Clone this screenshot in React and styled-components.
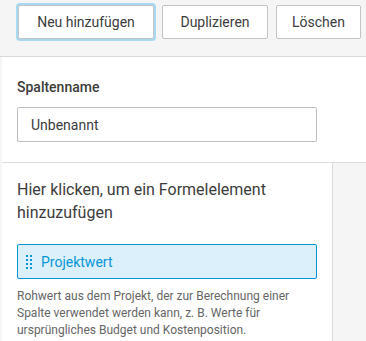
import React from "react";
import styled, { createGlobalStyle } from "styled-components";

const Global = createGlobalStyle`
  html, body { margin: 0; padding: 0; background: #f5f5f5; }
  body { font-family: "Roboto", "Noto Sans", sans-serif; color: #3c3c3c; }
  * { box-sizing: border-box; }
`;

const Page = styled.div`
  width: 366px;
  height: 341px;
  overflow: hidden;
  background: #f5f5f5;
  display: flex;
  flex-direction: column;
`;

const Toolbar = styled.div`
  height: 57px;
  display: flex;
  align-items: flex-start;
  gap: 8px;
  padding: 5px 0 0 18px;
  border-bottom: 1px solid #d9d9d9;
  flex-shrink: 0;
`;

const Button = styled.button`
  height: 34px;
  width: ${(p) => p.$w}px;
  padding: 0;
  background: #fff;
  border: 1px solid #c4c4c4;
  border-radius: 2px;
  font-family: inherit;
  font-size: 14px;
  color: #3c3c3c;
  white-space: nowrap;
  box-shadow: ${(p) => (p.$focused ? "0 0 0 2px #a7d9f2" : "none")};
`;

const Main = styled.div`
  flex: 1;
  margin-left: 2px;
  display: flex;
  flex-direction: column;
  background: #fff;
`;

const NameSection = styled.div`
  padding: 22px 0 0 15px;
  height: 106px;
  border-bottom: 1px solid #dcdcdc;
  flex-shrink: 0;
`;

const Label = styled.div`
  font-size: 14px;
  line-height: 16px;
  font-weight: 500;
  color: #3c3c3c;
  margin-bottom: 12px;
`;

const Input = styled.div`
  width: 300px;
  height: 35px;
  border: 1px solid #bdbdbd;
  border-radius: 2px;
  display: flex;
  align-items: center;
  padding-left: 13px;
  font-size: 14px;
  color: #3c3c3c;
`;

const Lower = styled.div`
  flex: 1;
  display: flex;
`;

const FormulaPanel = styled.div`
  width: 331px;
  background: #fff;
  border-right: 1px solid #dcdcdc;
  padding: 15px 0 0 15px;
`;

const Side = styled.div`
  flex: 1;
  background: #f5f5f5;
`;

const Heading = styled.div`
  font-size: 16px;
  line-height: 23px;
  color: #3c3c3c;
  width: 300px;
`;

const Item = styled.div`
  margin-top: 20px;
  width: 300px;
  height: 35px;
  background: #dcf0fb;
  border: 1px solid #0696d7;
  border-radius: 2px;
  display: flex;
  align-items: center;
  padding-left: 8px;
  gap: 9px;
  color: #0696d7;
  font-size: 14px;
`;

const Description = styled.div`
  margin-top: 9px;
  width: 305px;
  font-size: 12px;
  line-height: 17px;
  color: #666;
`;

const Grip = () => (
  <svg width="6" height="14" viewBox="0 0 6 14">
    {[0, 1, 2, 3].map((r) =>
      [0, 1].map((c) => (
        <rect key={`${r}-${c}`} x={c * 4} y={r * 4} width="2" height="2" fill="#0696d7" />
      ))
    )}
  </svg>
);

export default function App() {
  return (
    <>
      <Global />
      <Page>
        <Toolbar>
          <Button $focused $w={136}>Neu hinzufügen</Button>
          <Button $w={106}>Duplizieren</Button>
          <Button $w={85}>Löschen</Button>
        </Toolbar>
        <Main>
          <NameSection>
            <Label>Spaltenname</Label>
            <Input>Unbenannt</Input>
          </NameSection>
          <Lower>
            <FormulaPanel>
              <Heading>Hier klicken, um ein Formelelement hinzuzufügen</Heading>
              <Item>
                <Grip />
                Projektwert
              </Item>
              <Description>
                Rohwert aus dem Projekt, der zur Berechnung einer Spalte verwendet werden kann, z. B. Werte für ursprüngliches Budget und Kostenposition.
              </Description>
            </FormulaPanel>
            <Side />
          </Lower>
        </Main>
      </Page>
    </>
  );
}
